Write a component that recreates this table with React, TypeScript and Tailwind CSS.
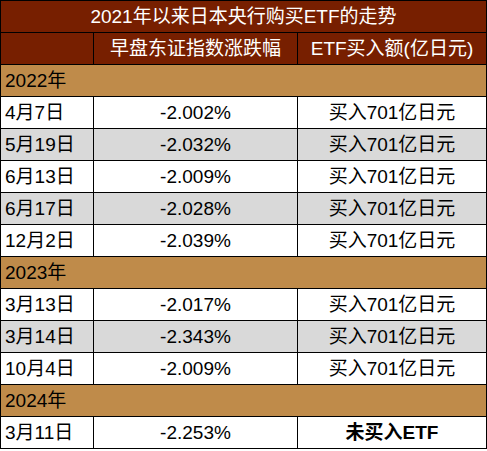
const font = "font-['Liberation_Sans','Noto_Sans_CJK_SC',sans-serif]";

type Row =
  | { kind: "year"; label: string }
  | { kind: "data"; date: string; pct: string; amt: string; gray?: boolean; bold?: boolean };

const rows: Row[] = [
  { kind: "year", label: "2022年" },
  { kind: "data", date: "4月7日", pct: "-2.002%", amt: "买入701亿日元" },
  { kind: "data", date: "5月19日", pct: "-2.032%", amt: "买入701亿日元", gray: true },
  { kind: "data", date: "6月13日", pct: "-2.009%", amt: "买入701亿日元" },
  { kind: "data", date: "6月17日", pct: "-2.028%", amt: "买入701亿日元", gray: true },
  { kind: "data", date: "12月2日", pct: "-2.039%", amt: "买入701亿日元" },
  { kind: "year", label: "2023年" },
  { kind: "data", date: "3月13日", pct: "-2.017%", amt: "买入701亿日元" },
  { kind: "data", date: "3月14日", pct: "-2.343%", amt: "买入701亿日元", gray: true },
  { kind: "data", date: "10月4日", pct: "-2.009%", amt: "买入701亿日元" },
  { kind: "year", label: "2024年" },
  { kind: "data", date: "3月11日", pct: "-2.253%", amt: "未买入ETF", bold: true },
];

export default function App() {
  return (
    <div className={`w-[487px] h-[451px] bg-white ${font} text-[19px] leading-none`}>
      <div className="border-l border-t border-black">
        {/* title */}
        <div className="h-[32px] flex items-center justify-center bg-[#771f00] text-white border-r border-b border-black">
          2021年以来日本央行购买ETF的走势
        </div>
        {/* column headers */}
        <div className="flex h-[32px] bg-[#771f00] text-white">
          <div className="w-[93px] border-r border-b border-black" />
          <div className="w-[204px] flex items-center justify-center border-r border-b border-black">
            早盘东证指数涨跌幅
          </div>
          <div className="w-[189px] flex items-center justify-center border-r border-b border-black">
            ETF买入额(亿日元)
          </div>
        </div>

        {rows.map((r, i) =>
          r.kind === "year" ? (
            <div
              key={i}
              className="h-[32px] flex items-center pl-[4px] bg-[#bf8b4a] text-black border-r border-b border-black"
            >
              {r.label}
            </div>
          ) : (
            <div key={i} className={`flex h-[32px] text-black ${r.gray ? "bg-[#d9d9d9]" : "bg-white"}`}>
              <div className="w-[93px] flex items-center pl-[4px] border-r border-b border-black">{r.date}</div>
              <div className="w-[204px] flex items-center justify-center border-r border-b border-black">{r.pct}</div>
              <div
                className={`w-[189px] flex items-center justify-center border-r border-b border-black ${
                  r.bold ? "font-bold" : ""
                }`}
              >
                {r.amt}
              </div>
            </div>
          )
        )}
      </div>
    </div>
  );
}
